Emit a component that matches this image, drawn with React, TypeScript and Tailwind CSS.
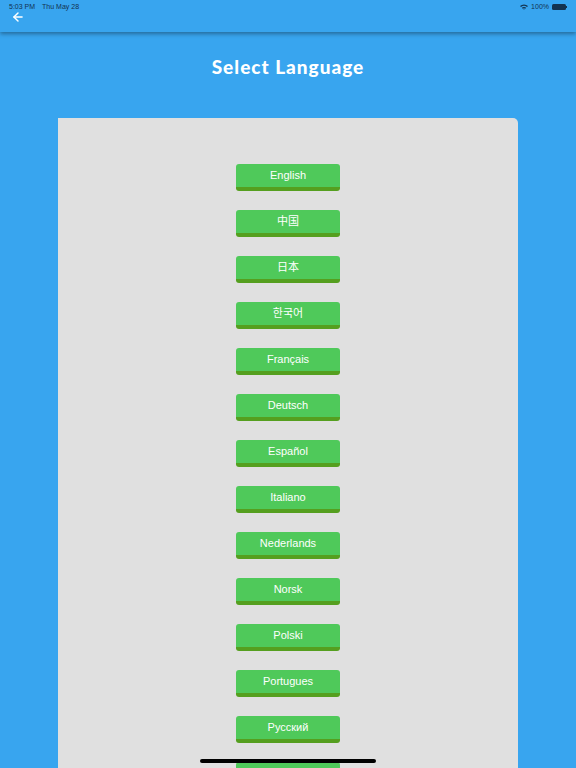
import React from "react";
import { ArrowLeft } from "lucide-react";

const languages = [
  "English",
  "中国",
  "日本",
  "한국어",
  "Français",
  "Deutsch",
  "Español",
  "Italiano",
  "Nederlands",
  "Norsk",
  "Polski",
  "Portugues",
  "Русский",
  "",
];

function StatusBar() {
  return (
    <div className="flex justify-between items-center h-[12px] px-[9px] pt-[2px] text-[7px] text-[#13324f] font-['Liberation_Sans',sans-serif]">
      <div className="flex gap-[7px]">
        <span>5:03 PM</span>
        <span>Thu May 28</span>
      </div>
      <div className="flex items-center gap-[3px]">
        <svg width="8" height="6" viewBox="0 0 8 6">
          <path d="M0 2 A6 6 0 0 1 8 2 L7 3 A4.5 4.5 0 0 0 1 3Z M1.8 3.8 A3.5 3.5 0 0 1 6.2 3.8 L5.2 4.8 A2 2 0 0 0 2.8 4.8Z M3.4 5.4 A1 1 0 0 1 4.6 5.4 L4 6Z" fill="#13324f" />
        </svg>
        <span>100%</span>
        <div className="flex items-center">
          <div className="w-[14px] h-[6px] rounded-[1.5px] bg-[#13324f]" />
          <div className="w-[1px] h-[2px] bg-[#13324f]" />
        </div>
      </div>
    </div>
  );
}

function LangButton({ label }: { label: string }) {
  return (
    <button className="w-[104px] h-[27px] shrink-0 rounded-[3px] bg-[#4fc95a] border-b-[4px] border-[#559f1f] text-white text-[11px] leading-none font-['Liberation_Sans','Noto_Sans_CJK_SC',sans-serif]">
      {label}
    </button>
  );
}

export default function App() {
  return (
    <div className="relative w-[576px] h-[768px] overflow-hidden bg-[#38a5ef]">
      <header className="h-[32px] bg-[#38a5ef] shadow-[0_2px_4px_rgba(0,0,0,0.35)] relative z-10">
        <StatusBar />
        <div className="px-[11px] -mt-[2px]">
          <ArrowLeft size={14} strokeWidth={2.5} color="white" />
        </div>
      </header>
      <h1 className="mt-[25px] text-center text-white text-[19px] leading-[20px] font-black tracking-[1px] font-['Lato',sans-serif]">
        Select Language
      </h1>
      <div className="ml-[58px] mt-[41px] w-[460px] h-[700px] bg-[#e0e0e0] rounded-tr-[5px] flex flex-col items-center pt-[46px] gap-[19px]">
        {languages.map((l, i) => (
          <LangButton key={i} label={l} />
        ))}
      </div>
      <div className="absolute left-[200px] top-[759px] w-[176px] h-[4px] rounded-full bg-black" />
    </div>
  );
}
